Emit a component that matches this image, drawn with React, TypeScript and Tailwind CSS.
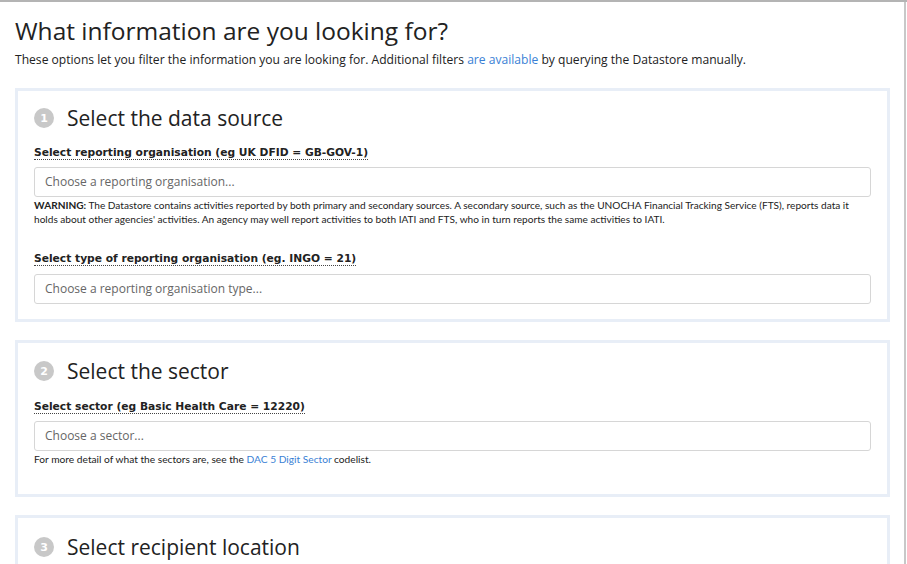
import React from "react";

const Badge = ({ n }: { n: string }) => (
  <span className="inline-flex items-center justify-center w-[20px] h-[20px] rounded-full bg-[#c8c8c8] text-white text-[11px] font-bold leading-none mr-[13px] shrink-0 [font-family:'DejaVu_Sans',sans-serif]">
    {n}
  </span>
);

const Label = ({ children }: { children: React.ReactNode }) => (
  <div className="[font-family:'DejaVu_Sans',sans-serif] font-bold text-[10.7px] text-[#222] leading-[14px]">
    <span className="border-b border-dotted border-[#444]">{children}</span>
  </div>
);

const Input = ({ placeholder }: { placeholder: string }) => (
  <div className="h-[30px] border border-[#d6d6d6] rounded-[3px] flex items-center pl-[10px] text-[12px] text-[#666] [font-family:'Open_Sans',sans-serif] bg-white">
    {placeholder}
  </div>
);

export default function App() {
  return (
    <div className="w-[907px] h-[564px] overflow-hidden bg-white border-t-2 border-[#b4b4b4]">
      <div className="w-[906px] h-full border-r-2 border-[#c8c8c8] pl-[15px] pr-[14px]">
        <h1 className="[font-family:'Open_Sans',sans-serif] text-[24.5px] text-[#222] leading-[32px] pt-[13px]">
          What information are you looking for?
        </h1>
        <p className="[font-family:'Open_Sans',sans-serif] text-[12.1px] text-[#222] mt-[5px] leading-[16px]">
          These options let you filter the information you are looking for. Additional filters{" "}
          <span className="text-[#3a7fd5]">are available</span> by querying the Datastore manually.
        </p>

        <div className="mt-[20px] border-[3px] border-[#e8eef7] px-[16px] pt-[13px] pb-[15px]">
          <h2 className="flex items-center [font-family:'Open_Sans',sans-serif] text-[21px] text-[#222] leading-[28px]">
            <Badge n="1" />
            Select the data source
          </h2>
          <div className="mt-[14px]">
            <Label>Select reporting organisation (eg UK DFID = GB-GOV-1)</Label>
          </div>
          <div className="mt-[7px]">
            <Input placeholder="Choose a reporting organisation..." />
          </div>
          <p className="mt-[1px] [font-family:Lato,sans-serif] text-[10.1px] leading-[14px] text-[#222]">
            <b>WARNING:</b> The Datastore contains activities reported by both primary and secondary sources. A secondary source, such as the UNOCHA Financial Tracking Service (FTS), reports data it holds about other agencies' activities. An agency may well report activities to both IATI and FTS, who in turn reports the same activities to IATI.
          </p>
          <div className="mt-[26px]">
            <Label>Select type of reporting organisation (eg. INGO = 21)</Label>
          </div>
          <div className="mt-[8px]">
            <Input placeholder="Choose a reporting organisation type..." />
          </div>
        </div>

        <div className="mt-[18px] border-[3px] border-[#e8eef7] px-[16px] pt-[14px] pb-[28px]">
          <h2 className="flex items-center [font-family:'Open_Sans',sans-serif] text-[21px] text-[#222] leading-[28px]">
            <Badge n="2" />
            Select the sector
          </h2>
          <div className="mt-[15px]">
            <Label>Select sector (eg Basic Health Care = 12220)</Label>
          </div>
          <div className="mt-[7px]">
            <Input placeholder="Choose a sector..." />
          </div>
          <p className="mt-[1px] [font-family:Lato,sans-serif] text-[10.2px] leading-[14px] text-[#222]">
            For more detail of what the sectors are, see the{" "}
            <span className="text-[#3a7fd5]">DAC 5 Digit Sector</span> codelist.
          </p>
        </div>

        <div className="mt-[18px] border-[3px] border-[#e8eef7] px-[16px] pt-[15px] pb-[20px]">
          <h2 className="flex items-center [font-family:'Open_Sans',sans-serif] text-[21px] text-[#222] leading-[28px]">
            <Badge n="3" />
            Select recipient location
          </h2>
        </div>
      </div>
    </div>
  );
}
